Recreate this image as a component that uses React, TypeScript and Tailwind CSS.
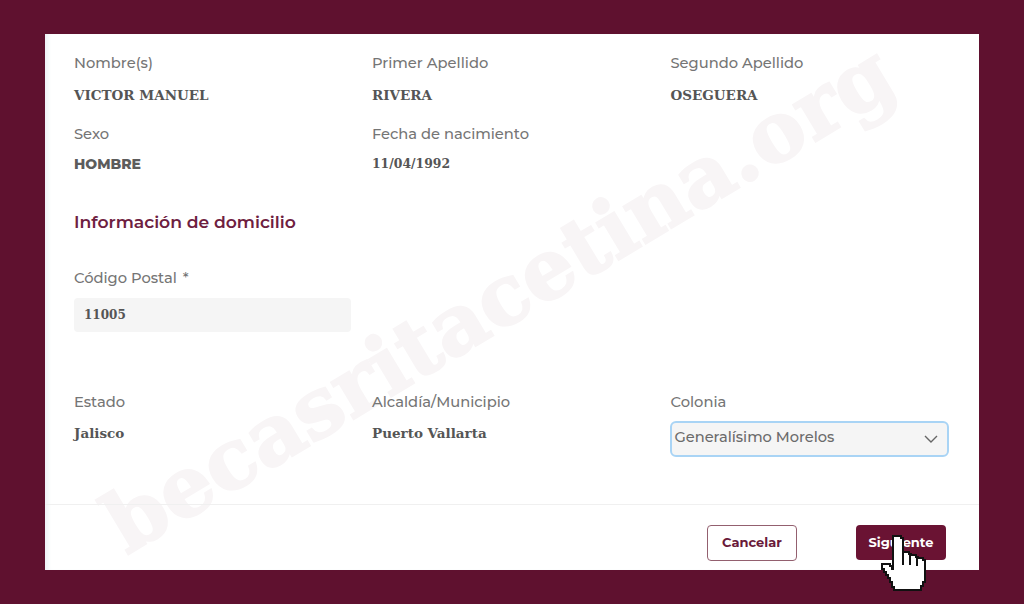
const SANS = "font-['Montserrat','Inter','Noto_Sans',sans-serif]";
const LABEL = `${SANS} text-[14.7px] leading-5 font-medium text-[#757575]`;
const SERIF = "font-['DejaVu_Serif',serif] font-bold text-[#555555]";

function Field({ label, value, valueClass }: { label: string; value: string; valueClass: string }) {
  return (
    <div>
      <div className={LABEL}>{label}</div>
      <div className={valueClass}>{value}</div>
    </div>
  );
}

function HandCursor() {
  return (
    <svg
      className="absolute left-[880px] top-[532px]"
      width="50"
      height="62"
      viewBox="880 532 50 62"
      shapeRendering="crispEdges"
    >
      <path
        d="M896 536h5v2h2v14h6v2h2v1h5v2h2v1h5v2h2v22h-2v4h-2v4h-27v-3h-2v-5h-2v-4h-2v-3h-2v-3h-2v-3h-2v-5h8v2h2v3h1v-33z"
        fill="#ffffff"
        stroke="#111111"
        strokeWidth="2"
      />
      <path d="M903 553v12M910 555v10M917 558v8" stroke="#111111" strokeWidth="1.5" fill="none" />
    </svg>
  );
}

export default function App() {
  const rowOne = `mt-[12px] ${SERIF} text-[13.5px] leading-5`;
  const rowTwo = `mt-[10px] ${SERIF} text-[12.4px] leading-5`;
  const rowThree = `mt-[11px] ${SERIF} text-[13.5px] leading-5`;

  return (
    <div className="h-[604px] w-[1024px] overflow-hidden bg-[#5f112f] pt-[34px] pl-[45px]">
      <div className="relative flex h-[536px] w-[934px] flex-col overflow-hidden bg-white shadow-[inset_5px_0_4px_-2px_#eff1f7]">
        <div
          aria-hidden
          className="absolute left-[-13px] top-[223px] w-[934px] -rotate-[31deg] text-center font-['DejaVu_Serif',serif] text-[83px] leading-none font-bold whitespace-nowrap text-[#f8f5f6] [-webkit-text-stroke:2px_#f8f5f6]"
        >
          becasritacetina.org
        </div>

        <div className="relative flex-1 px-[29px] pt-[19px]">
          <div className="grid grid-cols-[298px_298.5px_1fr]">
            <Field label="Nombre(s)" value="VICTOR MANUEL" valueClass={rowOne} />
            <Field label="Primer Apellido" value="RIVERA" valueClass={rowOne} />
            <Field label="Segundo Apellido" value="OSEGUERA" valueClass={rowOne} />
          </div>
          <div className="mt-[19px] grid grid-cols-[298px_298.5px_1fr]">
            <Field
              label="Sexo"
              value="HOMBRE"
              valueClass={`mt-[10px] ${SANS} text-[14px] leading-5 font-extrabold text-[#5c5c5c]`}
            />
            <Field label="Fecha de nacimiento" value="11/04/1992" valueClass={rowTwo} />
          </div>

          <h2 className={`${SANS} mt-[36px] text-[17.2px] leading-6 font-semibold text-[#6e2040]`}>
            Información de domicilio
          </h2>

          <div className={`mt-[34px] ${LABEL}`}>
            Código Postal<span className="ml-[6px]">*</span>
          </div>
          <div className={`mt-[10px] flex h-[34px] w-[277px] items-center rounded bg-[#f5f5f5] px-[10px] ${SERIF} text-[12px]`}>
            11005
          </div>

          <div className="mt-[60px] grid grid-cols-[298px_298.5px_1fr]">
            <Field label="Estado" value="Jalisco" valueClass={rowThree} />
            <Field label="Alcaldía/Municipio" value="Puerto Vallarta" valueClass={rowThree} />
            <div>
              <div className={LABEL}>Colonia</div>
              <div className="mt-[9px] -ml-px flex h-[36px] w-[279px] items-center justify-between rounded-md border-2 border-[#a9d4f5] bg-[#f5f5f5] pr-[9px] pl-[3px]">
                <span className={`${SANS} -mt-[2px] text-[14.6px] font-medium text-[#6b6b6b]`}>Generalísimo Morelos</span>
                <svg width="14" height="8" viewBox="0 0 14 8" fill="none" stroke="#666666" strokeWidth="1.4">
                  <path d="M1 1l6 6 6-6" />
                </svg>
              </div>
            </div>
          </div>
        </div>

        <div className="relative flex h-[66px] items-start justify-end border-t border-[#f0f0f0] pt-[20px] pr-[33px]">
          <button className={`${SANS} h-[36px] w-[90px] rounded border border-[#93606f] bg-white text-[13px] font-bold text-[#6a1a3a]`}>
            Cancelar
          </button>
          <button className={`${SANS} ml-[59px] h-[35px] w-[90px] rounded bg-[#6a1333] text-[13px] font-bold text-white`}>
            Siguiente
          </button>
        </div>
      </div>
      <HandCursor />
    </div>
  );
}
